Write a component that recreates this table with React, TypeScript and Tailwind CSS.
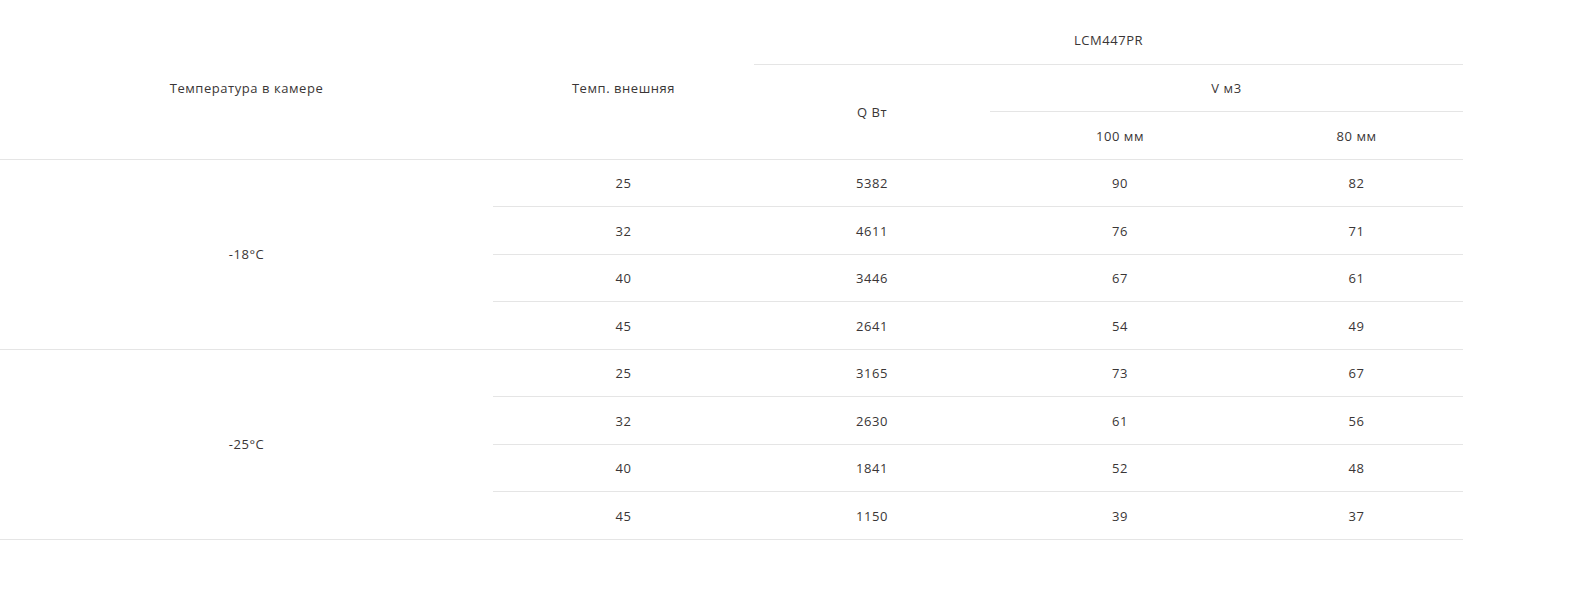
import React from "react";

const groups = [
  {
    t: "-18°C",
    rows: [
      ["25", "5382", "90", "82"],
      ["32", "4611", "76", "71"],
      ["40", "3446", "67", "61"],
      ["45", "2641", "54", "49"],
    ],
  },
  {
    t: "-25°C",
    rows: [
      ["25", "3165", "73", "67"],
      ["32", "2630", "61", "56"],
      ["40", "1841", "52", "48"],
      ["45", "1150", "39", "37"],
    ],
  },
];

export default function App() {
  const cell = "h-[47.5px] p-0 pt-[2px] text-center align-middle font-normal border-b border-[#e5e5e5]";
  return (
    <div className="min-h-[605px] bg-white pt-[16px] text-[13px] tracking-[0.55px] text-[#3a3636] [font-family:'Open_Sans',sans-serif]">
      <table className="w-[1463px] table-fixed border-collapse">
        <colgroup>
          <col className="w-[493px]" />
          <col className="w-[261px]" />
          <col className="w-[236px]" />
          <col className="w-[260px]" />
          <col className="w-[213px]" />
        </colgroup>
        <thead>
          <tr>
            <th rowSpan={3} className={cell}>Температура в камере</th>
            <th rowSpan={3} className={cell}>Темп. внешняя</th>
            <th colSpan={3} className={cell + " h-[48px]"}>LCM447PR</th>
          </tr>
          <tr>
            <th rowSpan={2} className={cell}>Q Вт</th>
            <th colSpan={2} className={cell}>V м3</th>
          </tr>
          <tr>
            <th className={cell}>100 мм</th>
            <th className={cell}>80 мм</th>
          </tr>
        </thead>
        <tbody>
          {groups.map((g) =>
            g.rows.map((r, i) => (
              <tr key={g.t + i}>
                {i === 0 && (
                  <td rowSpan={4} className={cell}>
                    {g.t}
                  </td>
                )}
                {r.map((v, j) => (
                  <td key={j} className={cell}>
                    {v}
                  </td>
                ))}
              </tr>
            ))
          )}
        </tbody>
      </table>
    </div>
  );
}
